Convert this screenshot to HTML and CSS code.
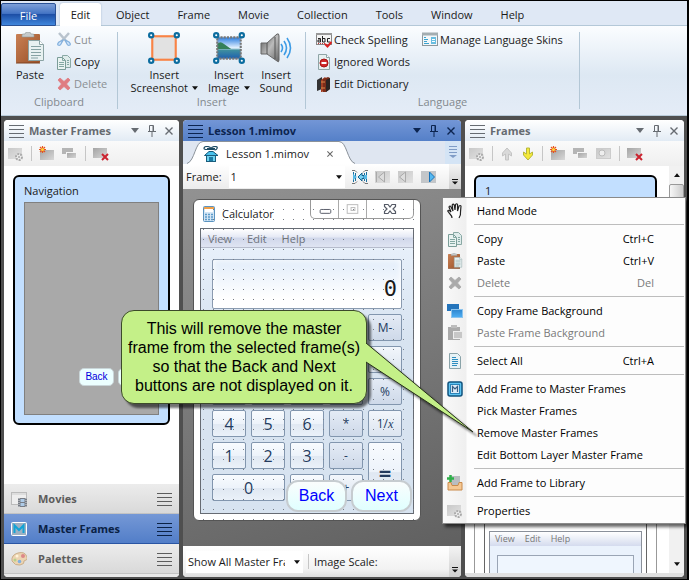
FILE: index.html
```html
<!DOCTYPE html>
<html lang="en">
<head>
<meta charset="utf-8">
<title>Lesson 1.mimov</title>
<link rel="stylesheet" href="styles.css">
</head>
<body>
<svg class="defs" aria-hidden="true">
  <defs>
    <linearGradient id="gGrey" x1="0" y1="0" x2="1" y2="1"><stop offset="0" stop-color="#a4a4a4"/><stop offset="1" stop-color="#d8d8d8"/></linearGradient>
    <linearGradient id="gPale" x1="0" y1="0" x2="1" y2="1"><stop offset="0" stop-color="#c8c8c8"/><stop offset="1" stop-color="#e2e2e2"/></linearGradient>
    <linearGradient id="gBlue" x1="0" y1="0" x2="0" y2="1"><stop offset="0" stop-color="#2f86cf"/><stop offset="1" stop-color="#4fb0f4"/></linearGradient>
    <linearGradient id="gWood" x1="0" y1="0" x2="1" y2="1"><stop offset="0" stop-color="#c98054"/><stop offset="1" stop-color="#9a5128"/></linearGradient>
    <linearGradient id="gMetal" x1="0" y1="0" x2="1" y2="1"><stop offset="0" stop-color="#555"/><stop offset=".5" stop-color="#bbb"/><stop offset="1" stop-color="#666"/></linearGradient>
    <linearGradient id="gSky" x1="0" y1="0" x2="0" y2="1"><stop offset="0" stop-color="#2a7de0"/><stop offset=".5" stop-color="#e6f3ff"/><stop offset=".6" stop-color="#3f8f9f"/><stop offset="1" stop-color="#1d5fb0"/></linearGradient>
  </defs>
  <symbol id="sheets" viewBox="0 0 16 16"><path d="M6.500 1.500h5l3 3v9h-8z" fill="#dfeceb" stroke="#8aa9a5"/><path d="M1.500 3.500h5l3 3v9h-8z" fill="#e9f3f1" stroke="#7b9d98"/><path d="M6.500 3.500v3h3M3 8.500h5M3 10.500h5M3 12.500h5M11 6.500h2M11 8.500h2M11 10.500h2" fill="none" stroke="#84a8a3"/></symbol>
  <symbol id="paste" viewBox="0 0 28 32"><rect y="2" width="24" height="29" rx="1" fill="url(#gWood)"/><path d="M0 31h24" stroke="#7d4220"/><path d="M6 5V3q0-1 1-1h2q0-2 3-2t3 2h2q1 0 1 1v2z" fill="#c6cacb" stroke="#8d9596" stroke-width=".6"/><path d="M12.500 8.500h11l4 4v16h-15z" fill="#e8f1f1" stroke="#8ba3a4"/><path d="M23.500 8.500v4h4" fill="#fff" stroke="#8ba3a4"/><path d="M15 14.500h10M15 17.500h10M15 20.500h10M15 23.500h10M15 26h7" stroke="#86a2a3"/></symbol>
  <symbol id="cut" viewBox="0 0 16 16"><path d="M3 1l8 9M13 1L5 10" stroke="#b9c3cd" stroke-width="2.500"/><path d="M7 8l-4 2q-2 2-1 3 2 1 3-1zM9 8l4 2q2 2 1 3-2 1-3-1z" fill="#cfe4fa" stroke="#83b0dd" stroke-width="1.200"/></symbol>
  <symbol id="cross" viewBox="0 0 16 16"><path d="M2 4l2-2 4 3.500L12 2l2 2-3.500 4 3.500 4-2 2-4-3.500L4 14l-2-2 3.500-4z" fill="currentColor" stroke="currentColor" stroke-width=".8"/></symbol>
  <symbol id="shot" viewBox="0 0 30 30"><rect x="4" y="4" width="22" height="22" fill="#e2e2e2" stroke="#f98345" stroke-width="2"/><g fill="#fff" stroke="#0b6c9f" stroke-width="2"><circle cx="3" cy="3" r="2"/><circle cx="27" cy="3" r="2"/><circle cx="3" cy="27" r="2"/><circle cx="27" cy="27" r="2"/></g></symbol>
  <symbol id="image" viewBox="0 0 30 30"><rect x="4" y="5" width="22" height="20" fill="url(#gSky)"/><path d="M4 11q3-3 6 0l7 5H4z" fill="#34805a"/><rect x="4" y="5" width="22" height="20" fill="none" stroke="#777" stroke-width="2" stroke-dasharray="2 1"/><g fill="#fff" stroke="#0b6c9f" stroke-width="2"><circle cx="3" cy="3" r="2"/><circle cx="27" cy="3" r="2"/><circle cx="3" cy="27" r="2"/><circle cx="27" cy="27" r="2"/></g></symbol>
  <symbol id="sound" viewBox="0 0 32 30"><path d="M1 10h6L17 1q2-1 2 2v24q0 3-2 1L7 21H1z" fill="url(#gMetal)" stroke="#666"/><path d="M7 10v11M15 4v22" stroke="#555"/><path d="M21 11q3 4 0 8M24 8q5 7 0 14M27 5q7 10 0 20" fill="none" stroke="#3d9be5" stroke-width="1.600"/></symbol>
  <symbol id="spell" viewBox="0 0 16 16"><rect x=".5" y="1.500" width="15" height="11" fill="#f4f4f4" stroke="#888"/><path d="M0 2h16" stroke="#999" stroke-width="2"/><g fill="none" stroke="#222"><path d="M2 6.500h2.500V10H2V8h2M6.500 4v6H9V6.500H6.500M14 6.500h-2.500V10H14"/></g><path d="M2 11.500h7" stroke="#c33" stroke-dasharray="1 1"/><path d="M9 12l2.500 2.500L15.500 10" fill="none" stroke="#d22" stroke-width="2"/></symbol>
  <symbol id="ignored" viewBox="0 0 16 16"><path d="M2.500.5h8l3 3v12h-11z" fill="#e7f0f0" stroke="#8fa5a6"/><path d="M10.500.5v3h3" fill="#fff" stroke="#8fa5a6"/><circle cx="8" cy="9" r="4" fill="#cf2a2a" stroke="#a11"/><path d="M5.500 9h5" stroke="#fff" stroke-width="2"/></symbol>
  <symbol id="dict" viewBox="0 0 16 16"><path d="M1 4l5-3v12l-5 2z" fill="#333"/><path d="M5 4l4-3 1 1v12l-4 2H5z" fill="#a43f23"/><path d="M7 3l5-2 2 1v11l-4 3H7z" fill="#7b2e1b"/><path d="M10 4l4-2v11l-4 3z" fill="#2b2422"/><path d="M5 6h4M5 12h4" stroke="#d98a4a"/></symbol>
  <symbol id="skins" viewBox="0 0 16 16"><rect x=".5" y="1.500" width="15" height="12" fill="#f3f7f9" stroke="#8b979d"/><path d="M0 2h16" stroke="#a3adb1" stroke-width="3"/><path d="M2 5.500h2M2 7.500h4M2 9.500h3M2 11.500h5" stroke="#3ba3cf"/><rect x="9" y="5" width="5" height="7" fill="#68bde0"/><path d="M10 7.500h3M10 9.500h3" stroke="#fff"/></symbol>
  <symbol id="lines" viewBox="0 0 15 14"><path d="M0 1.500h15M0 5.500h15M0 9.500h15M0 13.500h15" stroke="currentColor"/></symbol>
  <symbol id="tri" viewBox="0 0 8 5"><path d="M0 0h8L4 5z" fill="currentColor"/></symbol>
  <symbol id="pin" viewBox="0 0 8 12"><path d="M1.500.5h4v6h-4zM0 6.500h8M4 7v5M5 1v5" fill="none" stroke="currentColor"/></symbol>
  <symbol id="close" viewBox="0 0 8 8"><path d="M.5.5l7 7M7.500.5l-7 7" stroke="currentColor" stroke-width="1.400"/></symbol>
  <symbol id="props" viewBox="0 0 16 16"><rect y="2" width="14" height="11" fill="url(#gPale)"/><circle cx="11" cy="11" r="3" fill="#eee" stroke="#aaa" stroke-width="2" stroke-dasharray="2 1"/><circle cx="11" cy="11" r="1" fill="#aaa"/></symbol>
  <symbol id="newframe" viewBox="0 0 16 16"><rect x="1" y="4" width="14" height="10" fill="url(#gGrey)"/><path d="M3.500 0v7M0 3.500h7M1 1l5 5M6 1L1 6" stroke="#e8541d" stroke-width="1.200"/><circle cx="3.500" cy="3.500" r="1.500" fill="#ffd53a"/></symbol>
  <symbol id="dupe" viewBox="0 0 16 16"><rect y="2" width="11" height="6" fill="#b5b5b5"/><rect x="4.500" y="6.500" width="10" height="6" fill="url(#gGrey)" stroke="#f5f5f5"/></symbol>
  <symbol id="delframe" viewBox="0 0 16 16"><rect y="2" width="14" height="10" fill="url(#gGrey)"/><path d="M9 8l6 6M15 8l-6 6" stroke="#cb2430" stroke-width="2"/></symbol>
  <symbol id="snap" viewBox="0 0 16 16"><rect x=".5" y="2.500" width="14" height="10" fill="url(#gPale)" stroke="#ccc"/><circle cx="6" cy="7" r="3" fill="#eee" stroke="#bbb"/></symbol>
  <symbol id="down" viewBox="0 0 12 14"><path d="M4.500 1h3v6l3-2v3L6 13 1.500 8V5l3 2z" fill="#f4e93a" stroke="#b7b83b"/></symbol>
  <symbol id="up" viewBox="0 0 12 14"><path d="M4.500 13h3V7l3 2V6L6 1 1.500 6v3l3-2z" fill="#d9d9d9" stroke="#c4c4c4"/></symbol>
  <symbol id="film" viewBox="0 0 16 16"><rect x=".5" y="1.500" width="15" height="12" fill="#eee" stroke="#bbb"/><path d="M1 3h14" stroke="#ddd" stroke-width="2"/><rect x="7" y="7" width="9" height="9" fill="#777c85"/><path d="M9.500 8h4v3h-4zM9.500 12h4v3h-4z" fill="#aecbe8"/><path d="M8 7v9M15 7v9" stroke="#ddd" stroke-dasharray="1 1"/></symbol>
  <symbol id="mbadge" viewBox="0 0 16 14"><rect x=".5" y=".5" width="15" height="13" rx="1" fill="#9db0c2" stroke="#fff"/><path d="M3.500 11V3.500L8 8l4.500-4.500V11" fill="none" stroke="#12a3d6" stroke-width="2"/></symbol>
  <symbol id="palette" viewBox="0 0 16 14"><path d="M1 9q-1-6 6-8t9 4q1 3-1 3l-2 1q1 3-4 4T1 9z" fill="#ecd3b1" stroke="#c9ae8a"/><circle cx="12" cy="4" r="2" fill="#d88"/><circle cx="6" cy="4" r="1.500" fill="#fff4da"/><circle cx="4" cy="8" r="1.500" fill="#b6d28a"/><circle cx="8.500" cy="9.500" r="1.800" fill="#7fb0e0"/></symbol>
  <symbol id="hut" viewBox="0 0 16 16"><path d="M1.500 9.500L6 5.500h4l5 4z" fill="#48c1ec" stroke="#155a7b"/><rect x="3.500" y="9.500" width="9" height="6" fill="#6ed1ef" stroke="#1a5d7c"/><rect x="6" y="11" width="4" height="4" fill="#1b7ba5"/><path d="M1 2.500q0-2 3-2t4 2q1-2 4-2t2 2-3 1H4q-3 0-3-1zM4 2.500h8" fill="none" stroke="#1d4b63" stroke-width="1.200"/></symbol>
  <symbol id="merge" viewBox="0 0 16 14"><path d="M1.500 2v10M3.500 3v8M12.500 3v8M14.500 2v10" stroke="#1a6f9f"/><path d="M0 .5h3l2 2M0 13.500h3l2-2M16 .5h-3l-2 2M16 13.500h-3l-2-2" fill="none" stroke="#777"/><path d="M6 7l4-4v2.500h2v3h-2V11z" fill="#7cd1f3" stroke="#12608d"/><path d="M1 4l4 3-4 3zM15 5v4h-3V5z" fill="#57b9e6"/></symbol>
  <symbol id="first" viewBox="0 0 16 12"><rect width="15" height="12" fill="url(#gPale)"/><path d="M1.500 1v10M9.500 1v10l-6-5z" fill="#ddd" stroke="#aaa"/></symbol>
  <symbol id="prev" viewBox="0 0 16 12"><rect width="15" height="12" fill="url(#gPale)"/><path d="M7.500 1v10l-6-5z" fill="#ddd" stroke="#aaa"/></symbol>
  <symbol id="next" viewBox="0 0 16 12"><rect width="15" height="12" fill="#c3c6c9"/><path d="M8.500 1v10l5-5z" fill="#54b9f2" stroke="#1772b8"/></symbol>
  <symbol id="calc" viewBox="0 0 12 16"><rect x=".5" y=".5" width="11" height="15" rx="1" fill="#d4e6f5" stroke="#5b94c0"/><path d="M1 2h10" stroke="#f0a04b" stroke-width="2"/><rect x="2" y="3" width="8" height="3" fill="#fff"/><path d="M2 8.500h8M2 11h8M2 13.500h8" stroke="#5c9bc9" stroke-width="1.500" stroke-dasharray="2 1"/></symbol>
  <symbol id="hand" viewBox="0 0 16 16"><path d="M5 15q0-2-2-4L.8 8Q1 6.500 3 8l1 1-2-5q1-2 2 0l2 4-.8-6q1-1.800 2 0L8 7l.5-5.500q1.200-1.500 2 0L10.500 8l1.500-5q1.300-1 2 0L13.500 9q.5 3-1.500 6" fill="#fff" stroke="#222" stroke-width="1.200"/></symbol>
  <symbol id="copybg" viewBox="0 0 16 14"><rect y="0" width="12" height="7" fill="#2474bb"/><rect x="4.500" y="5.500" width="11" height="8" fill="url(#gBlue)" stroke="#8cc4ee"/></symbol>
  <symbol id="pastebg" viewBox="0 0 16 16"><rect x="1" y="2" width="12" height="13" fill="#aaa"/><rect x="4" width="6" height="3" fill="#bcbcbc"/><rect x="6.500" y="6.500" width="9" height="7" fill="#c7c7c7" stroke="#eee"/></symbol>
  <symbol id="doc" viewBox="0 0 16 16"><path d="M2.500.5h8l3 3v12h-11z" fill="#e7f2f5" stroke="#8aa3a9"/><path d="M5 4.500h4M5 6.500h6M5 8.500h6M5 10.500h6M5 12.500h5" stroke="#2c8dc0"/></symbol>
  <symbol id="mframe" viewBox="0 0 16 16"><rect x="1" y="1" width="14" height="14" rx="2" fill="#5fc4f2" stroke="#11537e" stroke-width="1.500"/><rect x="3.500" y="3.500" width="9" height="9" fill="#dcebf7" stroke="#2b84b9"/><path d="M5.500 11V5.500L8 8l2.500-2.500V11" fill="none" stroke="#3a5e83" stroke-width="1.200"/></symbol>
  <symbol id="library" viewBox="0 0 16 16"><rect x="4" y="1" width="9" height="9" fill="#b9bdc0"/><path d="M1 7.500h3l1 3h6l1-3h3v7.500H1z" fill="#f5c893" stroke="#c98a4b"/><path d="M3.500 0v7M0 3.500h7" stroke="#2fb04a" stroke-width="2.500"/></symbol>
  <symbol id="overflow" viewBox="0 0 6 6"><path d="M0 .5h6" stroke="#111"/><path d="M0 2.500h6l-3 3z" fill="#111"/></symbol>
  <symbol id="tablist" viewBox="0 0 8 12"><path d="M0 .5h8M0 3.500h8M0 6.500h8" stroke="#7f9cc6"/><path d="M0 9h8l-4 3z" fill="#7f9cc6"/></symbol>
</svg>

<div class="app">
  <nav class="tabs">
    <button class="tab file">File</button><button class="tab active">Edit</button><button class="tab">Object</button><button class="tab">Frame</button><button class="tab">Movie</button><button class="tab">Collection</button><button class="tab">Tools</button><button class="tab">Window</button><button class="tab">Help</button>
  </nav>

  <div class="ribbon">
    <section class="group clipboard">
      <div class="tools">
        <button class="big"><svg class="i-paste"><use href="#paste"/></svg>Paste</button>
        <div class="stack">
          <button class="small" disabled><svg class="i16"><use href="#cut"/></svg>Cut</button>
          <button class="small"><svg class="i16"><use href="#sheets"/></svg>Copy</button>
          <button class="small" disabled><svg class="i16 red"><use href="#cross"/></svg>Delete</button>
        </div>
      </div>
      <div class="caption">Clipboard</div>
    </section>
    <section class="group insert">
      <div class="tools">
        <button class="big"><svg class="i-big"><use href="#shot"/></svg>Insert<span>Screenshot <svg class="mini"><use href="#tri"/></svg></span></button>
        <button class="big"><svg class="i-big"><use href="#image"/></svg>Insert<span>Image <svg class="mini"><use href="#tri"/></svg></span></button>
        <button class="big"><svg class="i-big"><use href="#sound"/></svg>Insert<span>Sound</span></button>
      </div>
      <div class="caption">Insert</div>
    </section>
    <section class="group language">
      <div class="tools">
        <div class="stack">
          <button class="small"><svg class="i16"><use href="#spell"/></svg>Check Spelling</button>
          <button class="small"><svg class="i16"><use href="#ignored"/></svg>Ignored Words</button>
          <button class="small"><svg class="i16"><use href="#dict"/></svg>Edit Dictionary</button>
        </div>
        <div class="stack">
          <button class="small"><svg class="i16"><use href="#skins"/></svg>Manage Language Skins</button>
        </div>
      </div>
      <div class="caption">Language</div>
    </section>
  </div>

  <main class="workspace">
    <section class="panel masters">
      <header class="head"><svg class="i-lines"><use href="#lines"/></svg><h2>Master Frames</h2><svg class="i-tri"><use href="#tri"/></svg><svg class="i-pin"><use href="#pin"/></svg><svg class="i-close"><use href="#close"/></svg></header>
      <div class="toolbar"><svg class="i16"><use href="#props"/></svg><i class="rule"></i><svg class="i16"><use href="#newframe"/></svg><svg class="i16"><use href="#dupe"/></svg><i class="rule"></i><svg class="i16"><use href="#delframe"/></svg></div>
      <div class="list">
        <div class="card">Navigation
          <div class="sheet"><button class="pill">Back</button><button class="pill" aria-label="Next"></button></div>
        </div>
      </div>
      <div class="accordion">
        <button><svg class="i16"><use href="#film"/></svg><b>Movies</b><svg class="i-lines"><use href="#lines"/></svg></button>
        <button class="on"><svg class="i16"><use href="#mbadge"/></svg><b>Master Frames</b><svg class="i-lines"><use href="#lines"/></svg></button>
        <button><svg class="i16"><use href="#palette"/></svg><b>Palettes</b><svg class="i-lines"><use href="#lines"/></svg></button>
      </div>
    </section>

    <section class="panel document">
      <header class="head"><svg class="i-lines"><use href="#lines"/></svg><h2>Lesson 1.mimov</h2><svg class="i-tri"><use href="#tri"/></svg><svg class="i-pin"><use href="#pin"/></svg><svg class="i-close"><use href="#close"/></svg></header>
      <div class="doctabs">
        <svg class="tabedge" viewBox="0 0 16 23"><path d="M0 23C8 20 8 1 16 1V23z" fill="#fff"/><path d="M0 22.500C8 20 8 .5 16 .5" fill="none" stroke="#8b9299"/></svg>
        <div class="doctab"><svg class="i16"><use href="#hut"/></svg><span>Lesson 1.mimov</span><svg class="i6"><use href="#close"/></svg></div>
        <svg class="tabedge" viewBox="0 0 16 23"><path d="M16 23C8 20 8 1 0 1V23z" fill="#fff"/><path d="M16 22.500C8 20 8 .5 0 .5" fill="none" stroke="#8b9299"/></svg>
        <div class="tablist"><svg><use href="#tablist"/></svg></div>
      </div>
      <div class="framebar">
        <label for="frame">Frame:</label>
        <div class="pick grow"><select id="frame"><option>1</option></select><svg class="mini"><use href="#tri"/></svg></div>
        <svg class="i16"><use href="#merge"/></svg><svg class="i16"><use href="#first"/></svg><svg class="i16"><use href="#prev"/></svg><svg class="i16"><use href="#next"/></svg>
        <div class="more"><svg><use href="#overflow"/></svg></div>
      </div>
      <div class="canvas">
        <div class="calculator">
          <div class="title"><svg class="i-calc"><use href="#calc"/></svg><span>Calculator</span>
            <div class="caps">
              <svg viewBox="0 0 28 18"><rect x="9.500" y="9.500" width="11" height="4" rx="1" fill="#fff" stroke="#555a66"/></svg>
              <svg viewBox="0 0 28 18"><rect x="8.500" y="4.500" width="11" height="9" fill="none" stroke="#bbb"/><rect x="12.500" y="7.500" width="4" height="3" fill="none" stroke="#bbb"/></svg>
              <svg class="wide" viewBox="0 0 46 18"><path d="M17.500 4.500h3.500l2 2.500 2-2.500h3.500v2L26 9l2.500 2.500v2H25l-2-2.500-2 2.500h-3.500v-2L20 9l-2.500-2.500z" fill="#fff" stroke="#555a66" stroke-width="1.200"/></svg>
            </div>
          </div>
          <div class="face">
            <div class="menubar"><span>View</span><span>Edit</span><span>Help</span></div>
            <div class="keys">
              <output>0</output>
              <i class="key op"></i><i class="key op"></i><i class="key op"></i><i class="key op"></i><button class="key op">M-</button>
              <i class="key op"></i><i class="key op"></i><i class="key op"></i><i class="key op"></i><i class="key op light"></i>
              <i class="key"></i><i class="key"></i><i class="key"></i><i class="key op"></i><button class="key op">%</button>
              <button class="key">4</button><button class="key">5</button><button class="key">6</button><button class="key op">*</button><button class="key op light">1/<em>x</em></button>
              <button class="key">1</button><button class="key">2</button><button class="key">3</button><button class="key op">-</button><button class="key equals">=</button>
              <button class="key zero">0</button><i class="key"></i><button class="key op light">+</button>
            </div>
          </div>
          <svg class="dots"><defs><pattern id="grid" width="10" height="10" patternUnits="userSpaceOnUse"><rect y="9" width="1" height="1" fill="#777c84"/></pattern></defs><rect width="100%" height="100%" fill="url(#grid)"/></svg>
          <div class="navpair"><button>Back</button><button>Next</button></div>
        </div>
      </div>
      <div class="statusbar">
        <div class="pick"><select aria-label="Master frames"><option>Show All Master Frames</option></select><svg class="mini"><use href="#tri"/></svg></div>
        <i class="rule"></i><span>Image Scale:</span>
        <div class="more"><svg><use href="#overflow"/></svg></div>
      </div>
    </section>

    <section class="panel frames">
      <header class="head"><svg class="i-lines"><use href="#lines"/></svg><h2>Frames</h2><svg class="i-tri"><use href="#tri"/></svg><svg class="i-pin"><use href="#pin"/></svg><svg class="i-close"><use href="#close"/></svg></header>
      <div class="toolbar"><svg class="i16"><use href="#props"/></svg><i class="rule"></i><svg class="i-arrow"><use href="#up"/></svg><svg class="i-arrow"><use href="#down"/></svg><i class="rule"></i><svg class="i16"><use href="#newframe"/></svg><svg class="i16"><use href="#dupe"/></svg><svg class="i16"><use href="#snap"/></svg><i class="rule"></i><svg class="i16"><use href="#delframe"/></svg></div>
      <div class="scroller">
        <div class="thumbs">
          <div class="card">1</div>
          <div class="thumb"><div class="thumbwin"><div class="thumbface"><div class="thumbmenu"><span>View</span><span>Edit</span><span>Help</span></div><div class="thumbout"></div></div></div></div>
        </div>
        <div class="scrollbar"><svg class="mini flip"><use href="#tri"/></svg><div class="grip"></div><svg class="mini"><use href="#tri"/></svg></div>
      </div>
    </section>
  </main>

  <div class="menu" role="menu">
    <button><svg class="i16"><use href="#hand"/></svg><span>Hand Mode</span></button>
    <hr>
    <button><svg class="i16"><use href="#sheets"/></svg><span>Copy</span><kbd>Ctrl+C</kbd></button>
    <button><svg class="i16"><use href="#paste"/></svg><span>Paste</span><kbd>Ctrl+V</kbd></button>
    <button disabled><svg class="i16 grey"><use href="#cross"/></svg><span>Delete</span><kbd>Del</kbd></button>
    <hr>
    <button><svg class="i16"><use href="#copybg"/></svg><span>Copy Frame Background</span></button>
    <button disabled><svg class="i16"><use href="#pastebg"/></svg><span>Paste Frame Background</span></button>
    <hr>
    <button><svg class="i16"><use href="#doc"/></svg><span>Select All</span><kbd>Ctrl+A</kbd></button>
    <hr>
    <button><svg class="i16"><use href="#mframe"/></svg><span>Add Frame to Master Frames</span></button>
    <button><svg class="i16"></svg><span>Pick Master Frames</span></button>
    <button><svg class="i16"></svg><span>Remove Master Frames</span></button>
    <button><svg class="i16"></svg><span>Edit Bottom Layer Master Frame</span></button>
    <hr>
    <button><svg class="i16"><use href="#library"/></svg><span>Add Frame to Library</span></button>
    <hr>
    <button><svg class="i16"><use href="#props"/></svg><span>Properties</span></button>
  </div>

  <div class="callout">This will remove the master<br>frame from the selected frame(s)<br>so that the Back and Next<br>buttons are not displayed on it.
    <svg class="tail" viewBox="0 0 110 94"><path d="M1 2L108 91 1 21z" fill="#c4f088"/><path d="M1 2L108 91 1 21" fill="none" stroke="#26301a"/></svg>
  </div>
</div>
</body>
</html>
```
FILE: styles.css
```css
* { box-sizing: border-box; }
body {
  margin: 0;
  background: #000;
  color: #1a1a1a;
  font: 11px/16px "Open Sans", "Noto Sans", sans-serif;
}
button, select {
  margin: 0;
  padding: 0;
  border: 0;
  background: none;
  color: inherit;
  font: inherit;
}
button:disabled { color: #8b8f93; }
svg { display: block; flex: none; }
.defs { position: absolute; width: 0; height: 0; }
.i16 { width: 16px; height: 16px; }
.i6 { width: 6px; height: 6px; color: #666; }
.i-paste { width: 28px; height: 32px; }
.i-big { width: 32px; height: 32px; }
.i-lines { width: 15px; height: 14px; }
.i-tri { width: 8px; height: 5px; }
.i-pin { width: 8px; height: 12px; }
.i-close { width: 8px; height: 8px; }
.i-arrow { width: 14px; height: 14px; }
.i-calc { width: 12px; height: 16px; }
.mini { width: 6px; height: 4px; color: #111; }
.red { color: #df7c82; }
.grey { color: #aaa; }

.app {
  position: relative;
  display: flex;
  flex-direction: column;
  height: 100vh;
  min-height: 580px;
  border: 1px solid #000;
  border-right-width: 2px;
  overflow: hidden;
  background: #4f4f4f;
}

/* Ribbon */
.tabs {
  display: flex;
  height: 25px;
  padding-top: 2px;
  background: #dfe8f5;
  border-bottom: 1px solid #b4c8d8;
}
.tab { padding: 4px 14px; height: 23px; line-height: 16px; }
.tab.file {
  width: 55px;
  margin-right: 4px;
  color: #fff;
  border: 1px solid #2a5195;
  border-radius: 2px 2px 0 0;
  background: linear-gradient(#7d9fd8, #4474c4 45%, #1d4fa6 50%, #3f86dc);
}
.tab.active {
  width: 41px;
  padding: 4px 0;
  margin-right: 1px;
  background: #fff;
  border-radius: 3px 3px 0 0;
  box-shadow: 0 0 2px #9fb4cc;
}
.ribbon {
  display: flex;
  height: 90px;
  background: linear-gradient(#fbfdff, #dde8f3 55%, #e4ecf7);
  border-bottom: 1px solid #b9cbd9;
}
.group {
  display: flex;
  flex-direction: column;
  justify-content: space-between;
  margin: 6px 0;
  border-right: 1px solid #b3c7d6;
}
.clipboard { width: 117px; }
.insert { width: 188px; }
.language { width: 274px; }
.tools { display: flex; height: 66px; margin-top: -3px; }
.clipboard .tools { padding-left: 15px; gap: 12px; }
.insert .tools { justify-content: center; gap: 10px; }
.language .tools { padding-left: 10px; gap: 12px; }
.big {
  display: flex;
  flex-direction: column;
  align-items: center;
  padding-top: 3px;
  line-height: 13px;
}
.big > svg { margin-bottom: 4px; }
.big span { display: flex; align-items: center; gap: 4px; }
.small {
  display: flex;
  align-items: center;
  gap: 2px;
  height: 22px;
  white-space: nowrap;
}
.caption { text-align: center; color: #83898f; line-height: 14px; }

/* Panels */
.workspace {
  flex: 1;
  min-height: 0;
  display: grid;
  grid-template-columns: 175px minmax(0, 1fr) 219px;
  gap: 4px;
  padding: 4px 3px 2px;
}
.panel {
  display: flex;
  flex-direction: column;
  min-height: 0;
  overflow: hidden;
  border-radius: 4px;
  background: #fff;
}
.head {
  display: flex;
  align-items: center;
  gap: 9px;
  height: 21px;
  padding: 0 6px 0 5px;
  color: #666b71;
  background: linear-gradient(#fff, #e2ebf4);
}
.head h2 { flex: 1; margin: 0 0 0 -4px; font-size: 11px; line-height: 16px; }
.document .head { color: #0c2450; background: linear-gradient(#7396d6, #5580c8); }
.toolbar {
  display: flex;
  align-items: center;
  gap: 7px;
  height: 25px;
  padding: 0 4px;
  background: linear-gradient(#fafafa, #efefef);
}
.rule { width: 1px; height: 15px; background: #c6c6c6; }
.card {
  border: 2px solid #000;
  border-radius: 6px;
  background: #c2dfff;
  padding: 6px 9px;
}
.list { flex: 1; padding: 9px 9px 0; }
.list .card { height: 250px; display: flex; flex-direction: column; gap: 3px; }
.sheet {
  flex: 1;
  display: flex;
  align-items: flex-end;
  gap: 4px;
  padding: 0 0 28px 54px;
  border: 1px solid #808080;
  background: #a9a9a9;
  margin-bottom: 2px;
  overflow: hidden;
}
.pill {
  flex: none;
  width: 35px;
  height: 18px;
  border: 1px solid #c9d5d8;
  border-radius: 5px;
  background: #ecffff;
  color: #00d;
  font: 10px/14px "Liberation Sans", sans-serif;
}
.accordion { padding-bottom: 3px; background: #e9e9e9; }
.accordion button {
  display: flex;
  align-items: center;
  gap: 11px;
  width: 100%;
  height: 30px;
  padding: 0 7px;
  color: #5c5c5c;
  text-align: left;
  background: linear-gradient(#ececec, #d9d9d9);
  border-bottom: 1px solid #c3c3c3;
}
.accordion b { flex: 1; }
.accordion .on { color: #0a2145; background: linear-gradient(#7598d6, #527ec8); border-color: #2a55a3; }

/* Document panel */
.doctabs { display: flex; height: 23px; background: #dfe6f1; padding-left: 4px; }
.tabedge { width: 16px; height: 23px; }
.doctab {
  display: flex;
  align-items: center;
  gap: 7px;
  padding-top: 2px;
  background: #fff;
  border-top: 1px solid #8b9299;
}
.doctab .i6 { margin: 0 6px 0 11px; }
.tablist { margin-left: auto; width: 16px; padding: 5px 4px; background: #d4e4f5; }
.tablist svg { width: 8px; height: 12px; }
.framebar {
  display: flex;
  align-items: center;
  gap: 7px;
  height: 25px;
  padding-left: 3px;
  background: linear-gradient(#fff, #ececec);
}
.pick { position: relative; display: flex; align-items: center; background: #fff; }
.pick select { appearance: none; width: 100%; height: 22px; padding-left: 2px; outline: 0; }
.pick .mini { position: absolute; right: 3px; pointer-events: none; }
.grow { flex: 1; }
.more {
  display: flex;
  align-items: flex-end;
  align-self: stretch;
  width: 12px;
  margin-left: auto;
  padding: 0 3px 4px;
  background: linear-gradient(#f4f4f4, #cfcfcf);
}
.framebar .more { margin-left: 5px; }
.more svg { width: 6px; height: 6px; }
.canvas {
  flex: 1;
  min-height: 0;
  padding: 10px;
  background: linear-gradient(160deg, #929292, #606060);
}
.calculator {
  position: relative;
  width: 228px;
  height: 322px;
  padding: 0 6px;
  border: 1px solid #555;
  border-radius: 6px;
  background: #fff;
  overflow: hidden;
}
.title {
  display: flex;
  align-items: flex-start;
  height: 28px;
  padding-left: 3px;
}
.title > svg { margin: 6px 7px 0 0; }
.title > span { margin-top: 6px; }
.caps { display: flex; margin-left: auto; border: 1px solid #999; border-top: 0; border-radius: 0 0 5px 5px; }
.caps svg { width: 28px; height: 18px; border-right: 1px solid #aaa; }
.caps svg.wide { width: 46px; border: 0; }
.face { border: 1px solid #666b73; background: linear-gradient(#eaf2fc, #d7e3f0 40%); height: 286px; }
.menubar {
  display: flex;
  gap: 15px;
  height: 19px;
  padding: 2px 7px;
  color: #70757d;
  line-height: 16px;
  background: linear-gradient(#fff, #e5e9f5 45%, #d0d7ea 50%, #dfe4f2);
  border-bottom: 1px solid #b6bccc;
}
.keys {
  display: grid;
  grid-template-columns: repeat(5, 1fr);
  grid-template-rows: 50px;
  grid-auto-rows: 27px;
  gap: 5px;
  padding: 11px;
}
.keys output {
  grid-column: 1 / -1;
  display: flex;
  justify-content: flex-end;
  align-items: flex-end;
  padding: 0 4px 5px;
  border: 1px solid #8b9bb0;
  border-radius: 2px;
  background: linear-gradient(#e2edfa, #fff 80%);
  box-shadow: inset 0 0 6px #fff;
  font: 22px/28px "DejaVu Sans Mono", monospace;
}
.key {
  border: 1px solid #8296ae;
  border-radius: 2px;
  background: linear-gradient(#f8fbfe, #edf3fa 50%, #e0e8f2 52%, #eaf1f9);
  color: #243b5e;
  font-size: 16px;
  line-height: 20px;
}
.key.op { font-size: 12px; background: linear-gradient(#e4ebf5, #ced9e9); }
.key.light { background: linear-gradient(#f2f6fb, #dce5f0); }
.key em { font-family: "Liberation Serif", serif; }
.key.zero { grid-column: span 2; }
.key.equals { grid-row: span 2; font-size: 22px; font-weight: bold; }
.dots { position: absolute; left: 9px; top: 0; width: 212px; height: 100%; pointer-events: none; }
.navpair { position: absolute; right: 8px; bottom: 8px; display: flex; gap: 4px; }
.navpair button {
  width: 61px;
  height: 32px;
  border: 2px solid #c6ccd0;
  border-radius: 12px;
  background: linear-gradient(#fafdfd, #e0ffff);
  color: #00f;
  font: 16px/20px "Liberation Sans", sans-serif;
}
.statusbar {
  display: flex;
  align-items: center;
  height: 31px;
  gap: 5px;
  padding-left: 3px;
  background: linear-gradient(#fff, #f2f2f2 75%, #ddd);
}
.statusbar .pick { width: 117px; padding-right: 18px; overflow: hidden; }
.statusbar select { text-overflow: clip; }

/* Frames panel */
.scroller { flex: 1; min-height: 0; display: flex; border-bottom: 4px solid #e0e0e0; }
.thumbs { flex: 1; min-width: 0; padding: 9px 12px 0 9px; overflow: hidden; }
.frames .card { height: 320px; padding-left: 9px; }
.thumb { margin-top: 6px; height: 120px; padding: 0 9px; border: 1px solid #999; }
.thumbwin { height: 120px; padding: 28px 4px 0; border: 1px solid #666; }
.thumbface { height: 90px; border: 1px solid #8a909a; background: #eaf2fc; }
.thumbmenu {
  display: flex;
  gap: 10px;
  height: 14px;
  padding-left: 5px;
  color: #777;
  font-size: 9px;
  line-height: 13px;
  background: linear-gradient(#fff, #d4dbee);
}
.thumbout { height: 50px; margin: 9px 7px; border: 1px solid #9aa5b5; background: #eff6fe; }
.scrollbar { display: flex; flex-direction: column; align-items: center; width: 15px; padding: 7px 0; background: #f1f1f1; }
.grip { width: 15px; height: 130px; margin: 7px 0 auto; border: 1px solid #999; border-radius: 2px; background: linear-gradient(90deg, #f7f7f7, #ccc); }
.flip { transform: rotate(180deg); }

/* Context menu */
.menu {
  position: absolute;
  right: 1px;
  top: 196px;
  width: 244px;
  padding: 2px 1px 1px 0;
  border: 1px solid #8a8a8a;
  background: linear-gradient(90deg, #f9f9f9, #efefef 23px, #fdfdfd 24px);
  box-shadow: 3px 3px 3px rgba(0, 0, 0, .6);
}
.menu button {
  display: flex;
  align-items: center;
  width: 100%;
  height: 22px;
  padding: 0 30px 0 4px;
  color: #000;
  text-align: left;
  white-space: nowrap;
}
.menu button:disabled { color: #7a7a7a; }
.menu span { flex: 1; margin-left: 14px; }
.menu kbd { font: inherit; }
.menu hr { height: 1px; margin: 2px 0 3px 31px; border: 0; background: #bdbdbd; }

/* Callout */
.callout {
  position: absolute;
  left: 120px;
  top: 309px;
  width: 246px;
  padding: 8px 0;
  border: 1px solid #3c4a2a;
  border-radius: 13px;
  background: #c4f088;
  color: #000;
  filter: drop-shadow(4px 4px 1px rgba(0, 0, 0, .55));
  font: 16px/19px "Liberation Sans", sans-serif;
  text-align: center;
}
.tail { position: absolute; left: 243px; top: 30px; width: 110px; height: 94px; }
```
